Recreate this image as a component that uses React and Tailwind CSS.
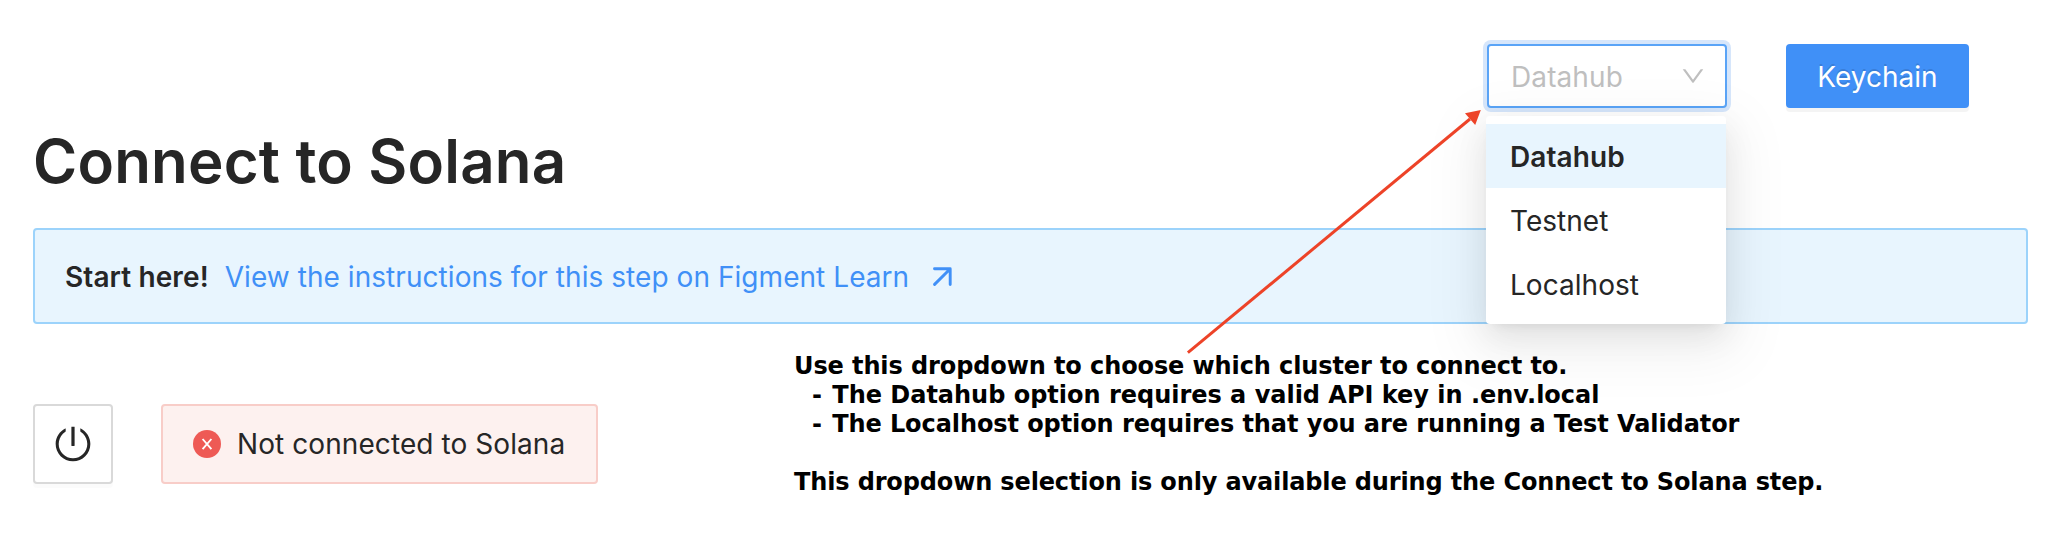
import React from "react";

const options = ["Datahub", "Testnet", "Localhost"];

function ChevronIcon() {
  return (
    <svg className="h-6 w-6" viewBox="64 64 896 896" fill="currentColor">
      <path d="M884 256h-75c-5.1 0-9.9 2.500-12.900 6.600L512 654.200 227.900 262.600c-3-4.100-7.800-6.600-12.900-6.600h-75c-6.500 0-10.300 7.400-6.500 12.700l352.600 486.100c12.800 17.600 39 17.600 51.700 0l352.600-486.100c3.900-5.300.1-12.700-6.400-12.700z" />
    </svg>
  );
}

function PowerIcon() {
  return (
    <svg className="h-9 w-9" viewBox="64 64 896 896" fill="currentColor">
      <path d="M705.600 124.900a8 8 0 0 0-11.600 7.200v64.200c0 5.500 2.900 10.600 7.500 13.600a352.200 352.200 0 0 1 62.200 49.800c32.700 32.800 58.400 70.900 76.300 113.300a355 355 0 0 1 27.900 138.700c0 48.100-9.400 94.800-27.900 138.700a355.920 355.920 0 0 1-76.300 113.300 353.060 353.060 0 0 1-113.200 76.400c-43.800 18.600-90.500 28-138.500 28s-94.700-9.400-138.500-28a353.060 353.060 0 0 1-113.200-76.400A355.920 355.920 0 0 1 184 650.400a355 355 0 0 1-27.900-138.700c0-48.100 9.400-94.800 27.900-138.700 17.900-42.400 43.600-80.500 76.300-113.300 19-19 39.800-35.600 62.200-49.800 4.700-2.900 7.500-8.100 7.500-13.600V132c0-6-6.300-9.800-11.600-7.200C178.500 195.200 82 339.300 80 506.300 77.200 745.100 272.500 943.500 511.200 944c239 .5 432.800-193.300 432.800-432.400 0-169.200-97-315.700-238.400-386.700zM480 560h64c4.400 0 8-3.600 8-8V88c0-4.400-3.600-8-8-8h-64c-4.400 0-8 3.600-8 8v464c0 4.400 3.600 8 8 8z" />
    </svg>
  );
}

function ErrorIcon() {
  return (
    <svg className="h-7 w-7" viewBox="0 0 28 28">
      <circle cx="14" cy="14" r="14" fill="#ee5a55" />
      <path d="M9.600 9l8.800 10.200M18.400 9L9.600 19.200" stroke="#fff" strokeWidth="1.900" fill="none" />
    </svg>
  );
}

function ArrowUpRightIcon() {
  return (
    <svg className="h-[19px] w-[19px]" viewBox="0 0 19 19" fill="none" stroke="currentColor" strokeWidth="2.900" strokeLinejoin="round" strokeLinecap="round">
      <path d="M1.500 1.800H17.200V17.500M16.800 2.200L1.600 17.400" />
    </svg>
  );
}

function ClusterSelect() {
  return (
    <div className="relative">
      <div className="flex h-16 w-60 items-center justify-between rounded-[4px] border-2 border-[#5aa4f7] bg-white pr-5 pl-[22px] text-[#bfbfbf] shadow-[0_0_0_4px_#d6e6fb]">
        <span className="pt-[2px] tracking-[0.1px]">Datahub</span>
        <ChevronIcon />
      </div>
      <ul className="absolute top-[72px] -left-px z-10 w-60 rounded-[4px] bg-white py-2 shadow-[0_6px_12px_-8px_rgba(0,0,0,0.12),0_12px_32px_0_rgba(0,0,0,0.08),0_18px_56px_16px_rgba(0,0,0,0.05)]">
        {options.map((name, i) => (
          <li
            key={name}
            className={
              i === 0
                ? "flex h-16 items-center bg-[#e8f5fe] px-6 pt-[2px] font-semibold tracking-[0.1px]"
                : "flex h-16 items-center px-6 pt-[2px] tracking-[0.03px]"
            }
          >
            {name}
          </li>
        ))}
      </ul>
    </div>
  );
}

export default function App() {
  return (
    <div className="relative h-[534px] w-[2062px] overflow-hidden bg-white pr-[34px] pl-[33px] font-['Inter',sans-serif] text-[28px] leading-[44px] text-[#262626]">
      <header className="flex justify-end gap-[59px] pt-11 pr-[59px]">
        <ClusterSelect />
        <button className="h-16 w-[183px] rounded-[4px] bg-[#4090f7] pt-[2px] text-white shadow-[0_4px_0_rgba(0,0,0,0.045)] [text-shadow:0_-2px_0_rgba(0,0,0,0.12)]">
          Keychain
        </button>
      </header>

      <h1 className="mt-[15px] text-[60px] leading-[76px] font-semibold tracking-[0.2px]">Connect to Solana</h1>

      <div className="mt-[29px] flex h-24 items-center rounded-[4px] border-2 border-[#9cd3fb] bg-[#e8f5fe] px-[30px]">
        <strong className="pt-[2px] font-semibold tracking-[0.1px]">Start here!</strong>
        <a className="ml-4 flex items-center gap-6 text-[#4090f7]">
          <span className="pt-[2px] tracking-[0.055px]">View the instructions for this step on Figment Learn</span>
          <ArrowUpRightIcon />
        </a>
      </div>

      <div className="flex items-start">
        <div className="mt-20 flex gap-12">
          <button className="flex h-20 w-20 items-center justify-center rounded-[4px] border-2 border-[#d9d9d9] bg-white shadow-[0_4px_0_rgba(0,0,0,0.016)]">
            <PowerIcon />
          </button>
          <div className="flex h-20 w-[437px] items-center gap-4 rounded-[4px] border-2 border-[#f8cdc8] bg-[#fdf1ef] pl-[30px]">
            <ErrorIcon />
            <span className="tracking-[0.08px]">Not connected to Solana</span>
          </div>
        </div>
        <div className="relative z-20 mt-7 ml-[196px] font-['DejaVu_Sans',sans-serif] text-[24px] leading-[29px] font-bold whitespace-pre text-black">
          <p className="tracking-[-0.1px]">Use this dropdown to choose which cluster to connect to.</p>
          <p className="pl-[18px] tracking-[-0.015px]"><span className="mr-[2px]">-</span> The Datahub option requires a valid API key in .env.local</p>
          <p className="pl-[18px] tracking-[-0.085px]"><span className="mr-[2px]">-</span> The Localhost option requires that you are running a Test Validator</p>
          <p className="mt-[29px] tracking-[-0.138px]">This dropdown selection is only available during the Connect to Solana step.</p>
        </div>
      </div>

      <svg className="pointer-events-none absolute inset-0 z-30 h-full w-full" viewBox="0 0 2062 534">
        <line x1="1187.900" y1="352.700" x2="1470" y2="119" stroke="#ed4328" strokeWidth="3" />
        <polygon points="1480.800,110 1465,113.300 1475.200,125" fill="#ed4328" />
      </svg>
    </div>
  );
}
